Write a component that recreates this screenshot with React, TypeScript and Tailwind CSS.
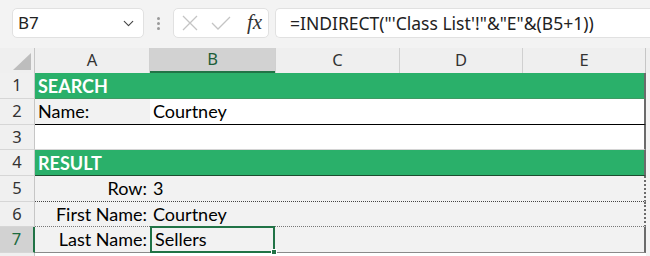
import React from 'react';
import { ChevronDown } from 'lucide-react';

const cellFont = { fontFamily: 'Lato, "Open Sans", sans-serif' };
const uiFont = { fontFamily: '"Noto Sans", "Open Sans", sans-serif' };

type Row = {
  n: number;
  h: string;
  kind: 'head' | 'name' | 'blank' | 'result';
  a?: string;
  b?: string;
  border: string;
  selected?: boolean;
};

const rows: Row[] = [
  { n: 1, h: 'h-[26px]', kind: 'head', a: 'SEARCH', border: 'border-b border-[#3f9a63]' },
  { n: 2, h: 'h-[26px]', kind: 'name', a: 'Name:', b: 'Courtney', border: 'border-b border-black' },
  { n: 3, h: 'h-[25px]', kind: 'blank', border: 'border-b border-[#d4d4d4]' },
  { n: 4, h: 'h-[26px]', kind: 'head', a: 'RESULT', border: 'border-b border-[#1d4d30]' },
  { n: 5, h: 'h-[26px]', kind: 'result', a: 'Row:', b: '3', border: 'border-b border-dotted border-[#444]' },
  { n: 6, h: 'h-[25px]', kind: 'result', a: 'First Name:', b: 'Courtney', border: 'border-b border-dotted border-[#777]' },
  { n: 7, h: 'h-[26px]', kind: 'result', a: 'Last Name:', b: 'Sellers', border: 'border-b border-[#8a8a8a]', selected: true },
];

function XIcon() {
  return (
    <svg width="18" height="18" viewBox="0 0 18 18" fill="none" stroke="#c4c4c4" strokeWidth="1.3">
      <path d="M2 2 L16 16 M16 2 L2 16" />
    </svg>
  );
}

function CheckIcon() {
  return (
    <svg width="20" height="16" viewBox="0 0 20 16" fill="none" stroke="#c4c4c4" strokeWidth="1.3">
      <path d="M1 8 L7 14 L19 2" />
    </svg>
  );
}

export default function App() {
  return (
    <div className="w-[650px] h-[256px] overflow-hidden bg-[#f3f3f3] text-black">
      {/* formula bar */}
      <div className="h-[48px] flex items-start pt-[8px] pl-[12px]">
        <div className="w-[132px] h-[30px] bg-white border border-[#e1e1e1] rounded-[5px] flex items-center justify-between pl-[5px] pr-[6px]">
          <span className="text-[17px] text-[#222]" style={uiFont}>B7</span>
          <ChevronDown className="w-[17px] h-[17px] text-[#444]" strokeWidth={1.6} />
        </div>
        <div className="w-[29px] h-[30px] flex flex-col items-center justify-center gap-[2px]">
          <span className="w-[3px] h-[3px] rounded-full bg-[#9a9a9a]" />
          <span className="w-[3px] h-[3px] rounded-full bg-[#9a9a9a]" />
          <span className="w-[3px] h-[3px] rounded-full bg-[#9a9a9a]" />
        </div>
        <div className="w-[96px] h-[30px] bg-white border border-[#e1e1e1] rounded-[5px] flex items-center pl-[7px] gap-[12px]">
          <XIcon />
          <CheckIcon />
          <span className="ml-[4px] text-[21px] italic text-[#333]" style={{ fontFamily: '"Liberation Serif", serif' }}>fx</span>
        </div>
        <div className="ml-[6px] flex-1 h-[30px] bg-white border border-[#e1e1e1] border-r-0 rounded-l-[5px] flex items-center pl-[14px]">
          <span className="text-[17.5px] text-[#222] whitespace-nowrap" style={uiFont}>=INDIRECT("'Class List'!"&amp;"E"&amp;(B5+1))</span>
        </div>
      </div>

      {/* column headers */}
      <div className="h-[25px] flex bg-[#efefef] text-[16.5px] text-[#333]" style={uiFont}>
        <div className="w-[35px] border-r border-[#c6c6c6] relative">
          <svg className="absolute right-[3px] bottom-[3px]" width="18" height="17" viewBox="0 0 18 17">
            <path d="M18 0 L18 17 L0 17 Z" fill="#bdbdbd" />
          </svg>
        </div>
        <div className="w-[115px] flex items-center justify-center border-r border-[#d0d0d0]">A</div>
        <div className="w-[125px] flex items-center justify-center bg-[#d2d2d2] border-b-2 border-[#217346] text-[#1d5e39]">B</div>
        <div className="w-[125px] flex items-center justify-center border-r border-[#d0d0d0] border-l">C</div>
        <div className="w-[123px] flex items-center justify-center border-r border-[#d0d0d0]">D</div>
        <div className="w-[123px] flex items-center justify-center border-r border-[#c6c6c6]">E</div>
      </div>

      {/* grid */}
      {rows.map((r) => (
        <div key={r.n} className={`${r.h} flex`}>
          <div
            className={`w-[35px] shrink-0 flex items-center justify-center text-[16.5px] border-b border-[#d6d6d6] ${
              r.selected ? 'bg-[#d2d2d2] text-[#1d6b3f] border-r-2 border-r-[#217346]' : 'bg-[#f0f0f0] text-[#333] border-r border-r-[#c6c6c6]'
            }`}
            style={uiFont}
          >
            {r.n}
          </div>
          <div
            className={`w-[611px] flex text-[18px] border-r-2 border-r-[#6b6b6b] ${r.border} ${
              r.kind === 'head' ? 'bg-[#2ab06a]' : r.kind === 'result' ? 'bg-[#f2f2f2]' : 'bg-white'
            }`}
            style={cellFont}
          >
            {r.kind === 'head' && (
              <span className="pl-[3px] font-bold text-white leading-none self-center">{r.a}</span>
            )}
            {r.kind === 'name' && (
              <>
                <div className="w-[115px] bg-[#f2f2f2] pl-[3px] flex items-center">{r.a}</div>
                <div className="pl-[3px] flex items-center">{r.b}</div>
              </>
            )}
            {r.kind === 'result' && (
              <>
                <div className="w-[115px] pr-[3px] flex items-center justify-end">{r.a}</div>
                <div
                  className={`w-[125px] pl-[3px] flex items-center relative ${
                    r.selected ? 'border-2 border-[#217346] -my-px' : ''
                  }`}
                >
                  {r.b}
                  {r.selected && (
                    <span className="absolute -right-[4px] -bottom-[4px] w-[6px] h-[6px] bg-[#217346] border border-white" />
                  )}
                </div>
              </>
            )}
          </div>
        </div>
      ))}
      <div className="h-[4px] flex">
        <div className="w-[35px] bg-[#f0f0f0] border-r border-[#c6c6c6]" />
        <div className="w-[611px] bg-white" />
      </div>
    </div>
  );
}
